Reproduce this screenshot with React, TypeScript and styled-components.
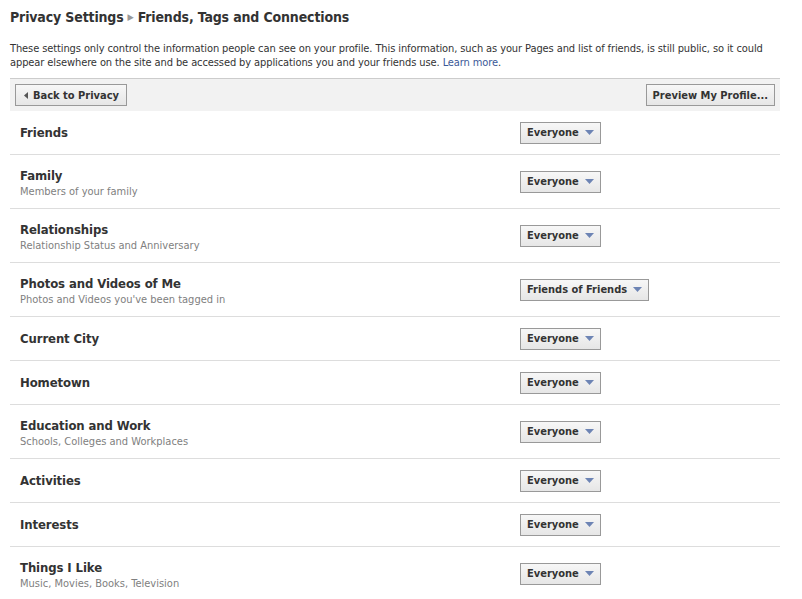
import React from "react";
import styled, { createGlobalStyle } from "styled-components";

const Global = createGlobalStyle`
  html, body { margin: 0; padding: 0; background: #fff; }
  body { font-family: "DejaVu Sans Condensed", "DejaVu Sans", sans-serif; font-size: 11px; color: #333; }
`;

const Page = styled.div`
  width: 770px;
  padding: 8px 0 0 10px;
`;

const Title = styled.h2`
  margin: 0;
  font-size: 14px;
  line-height: 18px;
  font-weight: bold;
  color: #333;
  display: flex;
  align-items: center;
  gap: 4px;
  letter-spacing: -0.15px;
`;

const Sep = styled.span`
  color: #999;
  font-size: 9px;
  font-weight: normal;
`;

const Intro = styled.p`
  margin: 16px 0 0;
  line-height: 14px;
  color: #333;
  width: 770px;
  letter-spacing: -0.1px;
`;

const Link = styled.a`
  color: #3b5998;
  text-decoration: none;
`;

const Toolbar = styled.div`
  margin-top: 8px;
  border-top: 1px solid #ccc;
  background: #f2f2f2;
  height: 32px;
  display: flex;
  align-items: center;
  justify-content: space-between;
  padding: 0 5px;
`;

const Button = styled.button`
  font-family: inherit;
  font-size: 11px;
  font-weight: bold;
  color: #333;
  height: 22px;
  padding: 0 6px;
  border: 1px solid #999;
  background: linear-gradient(#f7f7f7, #e6e6e6);
  display: inline-flex;
  align-items: center;
  gap: 4px;
  cursor: pointer;
`;

const BackButton = styled(Button)`
  padding: 0 7px 0 8px;
  gap: 5px;
`;

const Rows = styled.div``;

const Row = styled.div<{ $tall?: boolean }>`
  display: flex;
  align-items: center;
  height: ${(p) => (p.$tall ? 53 : 43)}px;
  border-bottom: 1px solid #ddd;
  padding-left: 10px;
  &:last-child { border-bottom: none; }
`;

const Label = styled.div<{ $tall?: boolean }>`
  width: 500px;
  display: flex;
  flex-direction: column;
  padding-top: ${(p) => (p.$tall ? 2 : 1)}px;
`;

const Name = styled.div`
  font-size: 13px;
  font-weight: bold;
  color: #333;
  line-height: 18px;
  letter-spacing: -0.1px;
`;

const Sub = styled.div`
  color: #808080;
  line-height: 14px;
`;

const Select = styled(Button)`
  padding: 0 6px;
  gap: 6px;
`;

const Caret = () => (
  <svg width="9" height="5" viewBox="0 0 9 5"><path d="M0 0h9L4.5 5z" fill="#6d84b4" /></svg>
);
const LeftCaret = () => (
  <svg width="4" height="7" viewBox="0 0 4 7"><path d="M4 0v7L0 3.5z" fill="#555" /></svg>
);

const items: { name: string; sub?: string; value: string }[] = [
  { name: "Friends", value: "Everyone" },
  { name: "Family", sub: "Members of your family", value: "Everyone" },
  { name: "Relationships", sub: "Relationship Status and Anniversary", value: "Everyone" },
  { name: "Photos and Videos of Me", sub: "Photos and Videos you've been tagged in", value: "Friends of Friends" },
  { name: "Current City", value: "Everyone" },
  { name: "Hometown", value: "Everyone" },
  { name: "Education and Work", sub: "Schools, Colleges and Workplaces", value: "Everyone" },
  { name: "Activities", value: "Everyone" },
  { name: "Interests", value: "Everyone" },
  { name: "Things I Like", sub: "Music, Movies, Books, Television", value: "Everyone" },
];

export default function App() {
  return (
    <Page>
      <Global />
      <Title>
        Privacy Settings <Sep>▶</Sep> Friends, Tags and Connections
      </Title>
      <Intro>
        These settings only control the information people can see on your profile. This information, such as your Pages and list of friends, is still public, so it could appear elsewhere on the site and be accessed by applications you and your friends use. <Link href="#">Learn more</Link>.
      </Intro>
      <Toolbar>
        <BackButton><LeftCaret />Back to Privacy</BackButton>
        <Button>Preview My Profile...</Button>
      </Toolbar>
      <Rows>
        {items.map((it) => (
          <Row key={it.name} $tall={!!it.sub}>
            <Label $tall={!!it.sub}>
              <Name>{it.name}</Name>
              {it.sub && <Sub>{it.sub}</Sub>}
            </Label>
            <Select>{it.value}<Caret /></Select>
          </Row>
        ))}
      </Rows>
    </Page>
  );
}
